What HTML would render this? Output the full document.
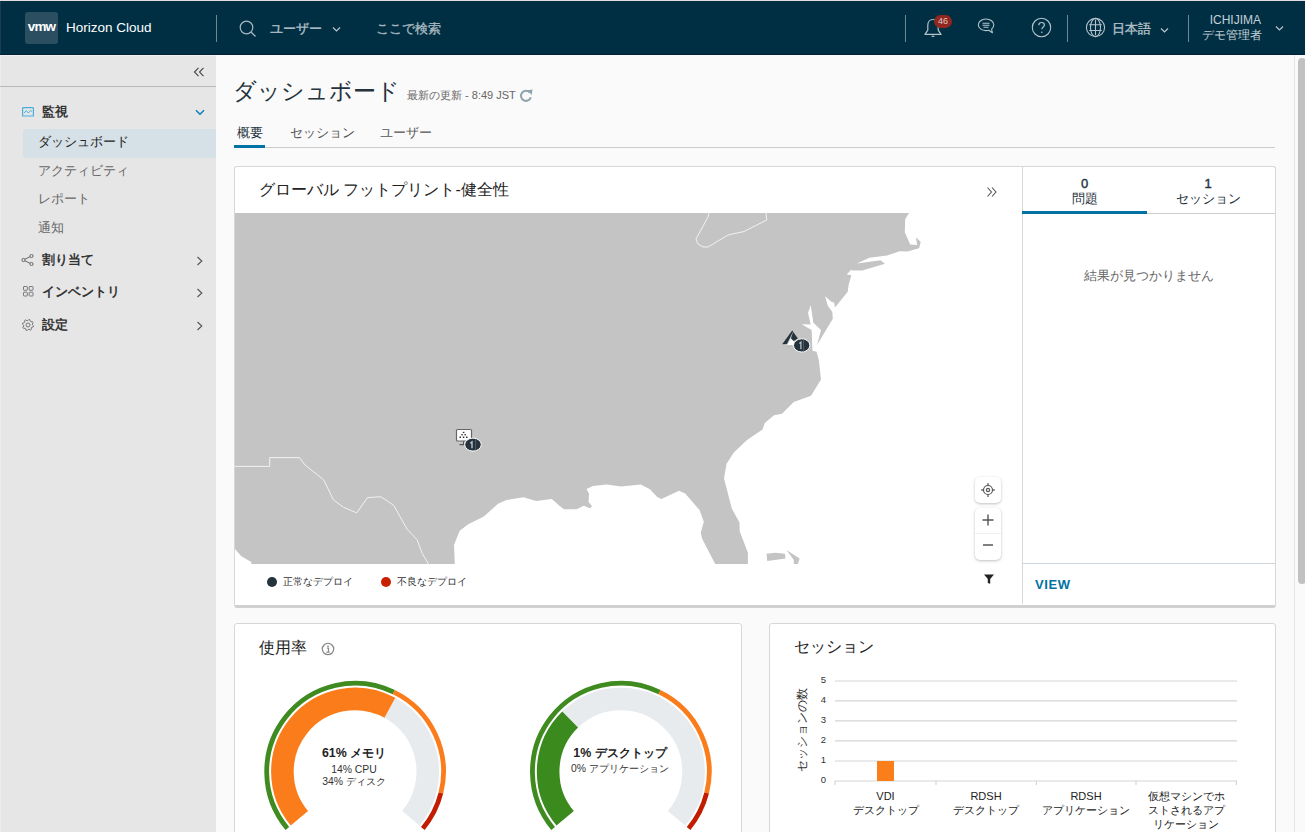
<!DOCTYPE html>
<html><head><meta charset="utf-8">
<style>
*{box-sizing:border-box;margin:0;padding:0}
html,body{width:1305px;height:832px;overflow:hidden;background:#fafafa;font-family:"Liberation Sans",sans-serif;color:#313131}
.abs{position:absolute}
#hdr{position:absolute;left:0;top:0;width:1305px;height:55px;background:#002f44;border-top:1px solid #e2dede}
#hdr:after{content:"";position:absolute;left:0;top:53px;width:1305px;height:1px;background:#00233a}
.htxt{position:absolute;color:#c5d0d6;font-size:13px;line-height:16px;white-space:nowrap}
.vdiv{position:absolute;top:14px;width:1px;height:27px;background:#6f8794}
#side{position:absolute;left:0;top:55px;width:216px;height:777px;background:#e6e6e6;border-top:1px solid #f3f0f0}
.nav{position:absolute;font-size:13px;line-height:16px;white-space:nowrap}
#main{position:absolute;left:216px;top:55px;width:1089px;height:777px;background:#fafafa}
.card{position:absolute;background:#fff;border:1px solid #d7d7d7;border-radius:3px}
</style></head><body>

<div id="hdr">
  <div class="abs" style="left:0;top:0;width:1px;height:53px;background:#1b3d4f"></div>
  <div class="abs" style="left:25px;top:11px;width:33px;height:32px;background:#2b4e60;border-radius:3px"></div>
  <div class="abs" style="left:25px;top:16px;width:33px;text-align:center;color:#fff;font-weight:bold;font-size:13.5px;line-height:20px;letter-spacing:-0.8px">vmw</div>
  <div class="htxt" style="left:66px;top:19px;color:#fff;font-size:13.5px">Horizon Cloud</div>
  <div class="vdiv" style="left:216px"></div>
  <!-- search icon -->
  <svg class="abs" style="left:239px;top:19px" width="18" height="18" viewBox="0 0 18 18"><circle cx="7.5" cy="7.5" r="6.3" fill="none" stroke="#a9b8c0" stroke-width="1.2"/><line x1="12" y1="12" x2="16.5" y2="16.5" stroke="#a9b8c0" stroke-width="1.3"/></svg>
  <div class="htxt" style="left:270px;top:20px;font-weight:normal;-webkit-text-stroke:.35px #b3c1c8;color:#b3c1c8">ユーザー</div>
  <svg class="abs" style="left:332px;top:25px" width="9" height="7" viewBox="0 0 9 7"><polyline points="1,1.5 4.5,5 8,1.5" fill="none" stroke="#b9c6cd" stroke-width="1.2"/></svg>
  <div class="htxt" style="left:376px;top:20px;font-weight:normal;-webkit-text-stroke:.35px #a7b6be;color:#a7b6be">ここで検索</div>

  <div class="vdiv" style="left:905px"></div>
  <!-- bell -->
  <svg class="abs" style="left:922px;top:16px" width="22" height="22" viewBox="0 0 22 22"><path d="M11 2.5c-3.2 0-5.2 2.6-5.2 6v4.6L3 17.4h16l-2.8-4.3V8.5c0-3.4-2-6-5.2-6z" fill="none" stroke="#b5c3ca" stroke-width="1.2" stroke-linejoin="round"/><path d="M9.6 19.3h2.8" stroke="#b5c3ca" stroke-width="1.2"/></svg>
  <div class="abs" style="left:934px;top:14px;width:18px;height:13px;background:#92271f;border-radius:6.5px;color:#dcc6c4;font-size:9px;line-height:13px;text-align:center">46</div>
  <!-- chat -->
  <svg class="abs" style="left:976px;top:16px" width="20" height="18" viewBox="0 0 20 18"><path d="M10 2C5.6 2 2.3 4.6 2.3 7.8c0 3.2 3.3 5.8 7.7 5.8 1 0 1.8-.1 2.7-.4l3.7 2.6-.8-3.6c1.5-1.1 2.2-2.6 2.2-4.4C17.8 4.6 14.4 2 10 2z" fill="none" stroke="#b5c3ca" stroke-width="1.1" stroke-linejoin="round"/><path d="M6.5 6.3h7M6.5 8.3h7M7.5 10.3h5" stroke="#b5c3ca" stroke-width="1.1"/></svg>
  <!-- help -->
  <svg class="abs" style="left:1031px;top:16px" width="21" height="21" viewBox="0 0 21 21"><circle cx="10.5" cy="10.5" r="9.2" fill="none" stroke="#b5c3ca" stroke-width="1.1"/><path d="M7.8 8.2c0-1.6 1.2-2.7 2.8-2.7s2.8 1 2.8 2.5c0 1.9-2.6 2.1-2.6 4.3" fill="none" stroke="#b5c3ca" stroke-width="1.2"/><circle cx="10.8" cy="15.2" r=".8" fill="#b5c3ca"/></svg>
  <div class="vdiv" style="left:1067px"></div>
  <!-- globe -->
  <svg class="abs" style="left:1085px;top:16px" width="21" height="21" viewBox="0 0 21 21"><g fill="none" stroke="#b5c3ca" stroke-width="1.1"><circle cx="10.5" cy="10.5" r="9.1"/><ellipse cx="10.5" cy="10.5" rx="5" ry="9.1"/><line x1="10.5" y1="2.6" x2="10.5" y2="18.2"/><path d="M4.2 7.7h12.6M4.2 13.5h12.6"/></g></svg>
  <div class="htxt" style="left:1112px;top:20px;font-weight:normal;-webkit-text-stroke:.35px #b3c1c8;color:#b3c1c8">日本語</div>
  <svg class="abs" style="left:1160px;top:26px" width="9" height="7" viewBox="0 0 9 7"><polyline points="1,1.5 4.5,5 8,1.5" fill="none" stroke="#b9c6cd" stroke-width="1.2"/></svg>
  <div class="vdiv" style="left:1188px"></div>
  <div class="htxt" style="left:1189px;width:72px;top:12px;text-align:right;font-size:12px;line-height:15px">ICHIJIMA</div>
  <div class="htxt" style="left:1190px;width:72px;top:27px;text-align:right;font-size:11.5px;line-height:15px">デモ管理者</div>
  <svg class="abs" style="left:1275px;top:24px" width="9" height="7" viewBox="0 0 9 7"><polyline points="1,1.5 4.5,5 8,1.5" fill="none" stroke="#b9c6cd" stroke-width="1.2"/></svg>
</div>

<div id="side">
  <div class="abs" style="left:0;top:0;width:1px;height:777px;background:#ececec"></div>
  <svg class="abs" style="left:193px;top:11px" width="12" height="10" viewBox="0 0 12 10"><g fill="none" stroke="#444" stroke-width="1.1"><polyline points="5.5,0.8 1.5,5 5.5,9.2"/><polyline points="10.5,0.8 6.5,5 10.5,9.2"/></g></svg>
  <div class="abs" style="left:0;top:30px;width:216px;height:1px;background:#b9b9b9"></div>
  <!-- monitor icon -->
  <svg class="abs" style="left:22px;top:51px" width="12" height="10" viewBox="0 0 12 10"><rect x=".6" y=".6" width="10.8" height="8.4" rx=".6" fill="none" stroke="#49afd9" stroke-width="1.2"/><polyline points="2.2,6 4.2,3.6 6.3,6 8.6,3.4 10,4.6" fill="none" stroke="#49afd9" stroke-width="1"/></svg>
  <div class="nav" style="left:42px;top:48px;font-weight:bold;color:#333">監視</div>
  <svg class="abs" style="left:195px;top:53px" width="10" height="7" viewBox="0 0 10 7"><polyline points="1,1.2 5,5.3 9,1.2" fill="none" stroke="#0079b8" stroke-width="1.3"/></svg>
  <div class="abs" style="left:23px;top:73px;width:193px;height:29px;background:#d5e0e7;border-radius:3px 0 0 3px"></div>
  <div class="nav" style="left:38px;top:78px;color:#222">ダッシュボード</div>
  <div class="nav" style="left:38px;top:107px;color:#666">アクティビティ</div>
  <div class="nav" style="left:38px;top:135px;color:#666">レポート</div>
  <div class="nav" style="left:38px;top:164px;color:#666">通知</div>
  <!-- share icon -->
  <svg class="abs" style="left:21px;top:197.5px" width="13" height="12" viewBox="0 0 13 12"><g fill="none" stroke="#666" stroke-width="1"><circle cx="2.5" cy="6" r="1.6"/><circle cx="10.5" cy="2" r="1.6"/><circle cx="10.5" cy="10" r="1.6"/><line x1="4" y1="5.2" x2="9" y2="2.7"/><line x1="4" y1="6.8" x2="9" y2="9.3"/></g></svg>
  <div class="nav" style="left:42px;top:196px;font-weight:bold;color:#333">割り当て</div>
  <svg class="abs" style="left:196px;top:200px" width="8" height="10" viewBox="0 0 8 10"><polyline points="1.5,1 5.8,5 1.5,9" fill="none" stroke="#555" stroke-width="1.1"/></svg>
  <!-- grid icon -->
  <svg class="abs" style="left:23px;top:230px" width="11" height="11" viewBox="0 0 11 11"><g fill="none" stroke="#7a7a7a" stroke-width="1"><rect x=".5" y=".5" width="3.8" height="3.8" rx=".5"/><rect x="6.2" y=".5" width="3.8" height="3.8" rx=".5"/><rect x=".5" y="6.2" width="3.8" height="3.8" rx=".5"/><rect x="6.2" y="6.2" width="3.8" height="3.8" rx=".5"/></g></svg>
  <div class="nav" style="left:42px;top:228px;font-weight:bold;color:#333">インベントリ</div>
  <svg class="abs" style="left:196px;top:232px" width="8" height="10" viewBox="0 0 8 10"><polyline points="1.5,1 5.8,5 1.5,9" fill="none" stroke="#555" stroke-width="1.1"/></svg>
  <!-- gear icon -->
  <svg class="abs" style="left:21.5px;top:263px" width="12" height="12" viewBox="0 0 12 12"><g fill="none" stroke="#6a6a6a" stroke-width=".9" stroke-linejoin="round"><circle cx="6" cy="6" r="2"/><polygon points="11.54,6.84 11.27,7.90 9.77,8.27 9.25,8.96 9.32,10.51 8.38,11.07 7.06,10.27 6.20,10.40 5.16,11.54 4.10,11.27 3.73,9.77 3.04,9.25 1.49,9.32 0.93,8.38 1.73,7.06 1.60,6.20 0.46,5.16 0.73,4.10 2.23,3.73 2.75,3.04 2.68,1.49 3.62,0.93 4.94,1.73 5.80,1.60 6.84,0.46 7.90,0.73 8.27,2.23 8.96,2.75 10.51,2.68 11.07,3.62 10.27,4.94 10.40,5.80"/></g></svg>
  <div class="nav" style="left:42px;top:261px;font-weight:bold;color:#333">設定</div>
  <svg class="abs" style="left:196px;top:265px" width="8" height="10" viewBox="0 0 8 10"><polyline points="1.5,1 5.8,5 1.5,9" fill="none" stroke="#555" stroke-width="1.1"/></svg>
</div>

<div id="main">
  <div class="abs" style="left:17px;top:21px;font-size:22.7px;line-height:30px;color:#25333d;white-space:nowrap">ダッシュボード</div>
  <div class="abs" style="left:191px;top:33px;font-size:11px;line-height:14px;color:#666;white-space:nowrap">最新の更新 - 8:49 JST</div>
  <svg class="abs" style="left:303px;top:34px" width="15" height="14" viewBox="0 0 15 14"><path d="M11.8 8.2A5 5 0 1 1 10.6 3.4" fill="none" stroke="#8fa3ad" stroke-width="2"/><polygon points="8.2,1.2 13.6,0.6 12.6,6" fill="#8fa3ad"/></svg>
  <!-- tabs -->
  <div class="abs" style="left:21px;top:70px;font-size:13px;line-height:16px;color:#25333d;white-space:nowrap">概要</div>
  <div class="abs" style="left:74px;top:70px;font-size:13px;line-height:16px;color:#565656;white-space:nowrap">セッション</div>
  <div class="abs" style="left:164px;top:70px;font-size:13px;line-height:16px;color:#565656;white-space:nowrap">ユーザー</div>
  <div class="abs" style="left:18px;top:92px;width:1041px;height:1px;background:#ccc"></div>
  <div class="abs" style="left:18px;top:90px;width:31px;height:3px;background:#0072a3"></div>
</div>

<!-- Card 1 : global footprint -->
<div class="card" style="left:234px;top:166px;width:1042px;height:442px;border-bottom:3px solid #d0d0d0"></div>
<div class="abs" style="left:259px;top:180px;font-size:16px;line-height:20px;color:#222;white-space:nowrap">グローバル フットプリント-健全性</div>
<svg class="abs" style="left:986px;top:186px" width="12" height="12" viewBox="0 0 12 12"><g fill="none" stroke="#555" stroke-width="1.1"><polyline points="1.5,1.5 5.5,6 1.5,10.5"/><polyline points="6,1.5 10,6 6,10.5"/></g></svg>
<!-- map -->
<svg class="abs" style="left:0;top:0" width="1305" height="832" viewBox="0 0 1305 832">
  <rect x="235" y="213" width="787" height="351" fill="#c4c4c4"/>
  <!-- Atlantic -->
  <polygon fill="#fff" points="909,213 905.2,219.3 904.8,232.3 910.2,244.5 917,244.9 916.1,237.3 920.7,242 919.1,248.3 907.3,251.6 899.7,251.2 887.1,255.4 869.4,257.8 856.8,263.4 880.4,260.3 885,263.8 862.3,270.6 851.4,270.6 851.8,268.9 846.7,274.6 851.4,275.2 848.6,285 847.7,291.8 835,307.5 834.1,302.6 831.4,301.7 825.1,296.3 827.8,305.7 832.3,312 832.8,318.8 817,344.9 821,330 813.4,322.8 810.7,305.3 808,313 810.7,324.6 801.7,324.2 811.6,330 812.5,350.8 816.6,351.7 818.8,360 821,379.4 811,395.8 793.75,402 782,413.75 774,415.3 764.8,423 762.5,429.4 747,440 733.8,452.4 726.6,463.8 724,478.3 731.7,508.3 739.6,522.8 739.6,531 747.9,552.8 747.9,564 1022,564 1022,213"/>
  <!-- Gulf -->
  <polygon fill="#fff" points="715.2,564 702.4,539.3 700.7,533 703.8,521.7 699.7,510.3 685.2,493.4 679,490.7 661.4,499 657.2,497 650,489.2 640.7,484.5 621,486.6 606.6,484.5 593,486 586.5,489 589,493.8 588.6,502 592,506.2 590,508.3 583.8,505.8 576.6,509.3 564,509.3 560,506.2 551.8,499 536.2,501 523.4,497.3 506.4,500.1 498,503.8 483.8,516.6 468.2,524.2 459.7,530.7 454,545 454.8,564"/>
  <polygon fill="#fff" points="235,549 241.3,556.2 251.3,562 251.3,564 235,564"/>
  <!-- Bahamas -->
  <polygon fill="#c4c4c4" points="766.5,553.8 775.2,552.8 785,553.8 785.5,558.4 767.3,561"/>
  <polygon fill="#c4c4c4" points="786.6,550 799.6,558.4 798,564 793.8,564 793.8,560"/>
  <!-- borders -->
  <polyline fill="none" stroke="#f2f2f2" stroke-width="1" points="235,466.4 269.7,466.4 269.7,457.6 299.5,457.6 305,465 323.6,479.7 333.5,500 343.4,507.2 356.7,512.9 367.5,497.6 380.8,496.7 393.6,505.2 407.2,529.3 417.1,539.8 422.2,553.4 428.5,564"/>
  <polyline fill="none" stroke="#f2f2f2" stroke-width="1" points="709,213 708,217 696,239 698,244 703,247 708,247 728,235 744,231.5 766.7,220 766,213"/>
</svg>



<!-- markers -->
<svg class="abs" style="left:450px;top:424px" width="36" height="30" viewBox="0 0 36 30">
  <rect x="6.5" y="5.5" width="15" height="11.5" rx="1" fill="#fff" stroke="#666" stroke-width="1.2"/>
  <g fill="#333"><rect x="12.8" y="7.8" width="1.6" height="1.2"/><rect x="11.3" y="10" width="1.4" height="1.4"/><rect x="14.5" y="10" width="1.4" height="1.4"/><rect x="9.5" y="12.5" width="1.5" height="1.5"/><rect x="12.8" y="12.5" width="1.5" height="1.5"/><rect x="16" y="12.5" width="1.5" height="1.5"/></g>
  <path d="M13.5 17.2v3.4h-4" fill="none" stroke="#555" stroke-width="1.1"/>
  <ellipse cx="23" cy="20.6" rx="8.3" ry="6.5" fill="#25333d" stroke="#fff" stroke-width="1"/>
  <path d="M20.4,19.3 L22,17.9 V24.2" fill="none" stroke="#c8ced2" stroke-width="1.3"/><line x1="25.6" y1="15" x2="25.6" y2="26.5" stroke="#5c6770" stroke-width=".8"/>
</svg>
<svg class="abs" style="left:0;top:0" width="1305" height="832" viewBox="0 0 1305 832">
  <path d="M787.2,345.6 L791.3,337.6 L794.2,340.9 L793.6,345.4 Z" fill="#fff"/>
  <path d="M782.2,344.2 L792.2,330.4 L793.1,331.6 L786.9,344.0 Z" fill="#25333d"/>
  <path d="M793.1,331.8 L797.9,338.5 L793.6,340.9 L791.0,338.4 Z" fill="#25333d"/>
  <line x1="787.3" y1="346.4" x2="792.3" y2="345.4" stroke="#888" stroke-width=".5"/>
  <ellipse cx="801.7" cy="345.4" rx="8.2" ry="6.6" fill="#25333d" stroke="#fff" stroke-width="1"/>
  <path d="M799.4,343.6 L800.9,342.2 V349.2" fill="none" stroke="#b8bec2" stroke-width="1.3"/>
  <line x1="803.6" y1="339" x2="803.6" y2="351.8" stroke="#5c6770" stroke-width=".8"/>
</svg>
<!-- map controls -->
<div class="abs" style="left:975px;top:477px;width:26px;height:26px;background:#fff;border-radius:5px;box-shadow:0 1px 3px rgba(0,0,0,.25)"></div>
<svg class="abs" style="left:980px;top:482px" width="16" height="16" viewBox="0 0 16 16"><g fill="none" stroke="#555" stroke-width="1.2"><circle cx="8" cy="8" r="4.5"/><circle cx="8" cy="8" r="1.6"/><line x1="8" y1="1" x2="8" y2="3.5"/><line x1="8" y1="12.5" x2="8" y2="15"/><line x1="1" y1="8" x2="3.5" y2="8"/><line x1="12.5" y1="8" x2="15" y2="8"/></g></svg>
<div class="abs" style="left:975px;top:508px;width:26px;height:52px;background:#fff;border-radius:5px;box-shadow:0 1px 3px rgba(0,0,0,.25)"></div>
<div class="abs" style="left:975px;top:533px;width:26px;height:1px;background:#eee"></div>
<svg class="abs" style="left:981px;top:513px" width="14" height="14" viewBox="0 0 14 14"><path d="M7 1.5v11M1.5 7h11" stroke="#555" stroke-width="1.4"/></svg>
<svg class="abs" style="left:981px;top:538px" width="14" height="14" viewBox="0 0 14 14"><path d="M2 7h10" stroke="#555" stroke-width="1.5"/></svg>
<svg class="abs" style="left:983px;top:573px" width="12" height="12" viewBox="0 0 12 12"><path d="M1 1.5h10L7.2 6v4.8L4.8 10V6z" fill="#222"/></svg>
<!-- legend -->
<div class="abs" style="left:267px;top:577px;width:10px;height:10px;border-radius:50%;background:#25333d"></div>
<div class="abs" style="left:283px;top:575px;font-size:10px;line-height:13px;color:#333;white-space:nowrap">正常なデプロイ</div>
<div class="abs" style="left:381px;top:577px;width:10px;height:10px;border-radius:50%;background:#c92100"></div>
<div class="abs" style="left:397px;top:575px;font-size:10px;line-height:13px;color:#333;white-space:nowrap">不良なデプロイ</div>

<!-- right panel -->
<div class="abs" style="left:1022px;top:167px;width:1px;height:437px;background:#d7d7d7"></div>
<div class="abs" style="left:1022px;top:176px;width:125px;text-align:center;font-size:13px;line-height:15px;-webkit-text-stroke:.4px #25333d;color:#25333d">0</div>
<div class="abs" style="left:1022px;top:191px;width:125px;text-align:center;font-size:13px;line-height:16px;color:#25333d">問題</div>
<div class="abs" style="left:1144px;top:176px;width:128px;text-align:center;font-size:13px;line-height:15px;-webkit-text-stroke:.4px #25333d;color:#25333d">1</div>
<div class="abs" style="left:1144px;top:191px;width:128px;text-align:center;font-size:13px;line-height:16px;color:#25333d">セッション</div>
<div class="abs" style="left:1022px;top:213px;width:253px;height:1px;background:#ccc"></div>
<div class="abs" style="left:1022px;top:211px;width:125px;height:3px;background:#0072a3"></div>
<div class="abs" style="left:1022px;top:268px;width:253px;text-align:center;font-size:13px;line-height:16px;color:#666">結果が見つかりません</div>
<div class="abs" style="left:1022px;top:563px;width:253px;height:1px;background:#ccd6db"></div>
<div class="abs" style="left:1035px;top:577px;font-size:13px;line-height:15px;font-weight:bold;color:#0072a3;letter-spacing:.6px">VIEW</div>

<!-- Card 2 : usage -->
<div class="card" style="left:234px;top:623px;width:508px;height:230px"></div>
<div class="abs" style="left:259px;top:638px;font-size:16px;line-height:20px;color:#222;white-space:nowrap">使用率</div>
<svg class="abs" style="left:321px;top:641.5px" width="14" height="14" viewBox="0 0 14 14"><circle cx="7" cy="7" r="5.7" fill="none" stroke="#8a8a8a" stroke-width="1.3"/><circle cx="7" cy="4.3" r=".85" fill="#8a8a8a"/><path d="M6 6.1h1.5v3.9M5.4 10.2h3.2" fill="none" stroke="#8a8a8a" stroke-width="1.2"/></svg>
<svg class="abs" style="left:0;top:0" width="1305" height="832" viewBox="0 0 1305 832" id="gauges">
<path d="M287.38 828.42A88.4 88.4 0 0 1 393.85 692.15" stroke="#3f8b1f" stroke-width="4.8" fill="none"/>
<path d="M393.85 692.15A88.4 88.4 0 0 1 440.87 792.99" stroke="#fb7c1a" stroke-width="4.8" fill="none"/>
<path d="M440.87 792.99A88.4 88.4 0 0 1 422.82 828.42" stroke="#c21d00" stroke-width="4.8" fill="none"/>
<path d="M389.90 707.77A72.7 72.7 0 0 1 410.79 818.33" stroke="#e8ebee" stroke-width="22.6" fill="none"/>
<path d="M299.41 818.33A72.7 72.7 0 0 1 389.90 707.77" stroke="#fb7c1a" stroke-width="22.6" fill="none"/>
<path d="M553.13 828.42A88.4 88.4 0 0 1 659.60 692.15" stroke="#3f8b1f" stroke-width="4.8" fill="none"/>
<path d="M659.60 692.15A88.4 88.4 0 0 1 706.62 792.99" stroke="#fb7c1a" stroke-width="4.8" fill="none"/>
<path d="M706.62 792.99A88.4 88.4 0 0 1 688.57 828.42" stroke="#c21d00" stroke-width="4.8" fill="none"/>
<path d="M570.17 719.48A72.7 72.7 0 0 1 676.54 818.33" stroke="#e8ebee" stroke-width="22.6" fill="none"/>
<path d="M565.16 818.33A72.7 72.7 0 0 1 570.17 719.48" stroke="#3b8a1e" stroke-width="22.6" fill="none"/>
</svg>
<div class="abs" style="left:254px;top:746px;width:200px;text-align:center;font-size:12.4px;line-height:15px;font-weight:bold;color:#222">61% メモリ</div>
<div class="abs" style="left:254px;top:763px;width:200px;text-align:center;font-size:10.4px;line-height:13px;color:#333">14% CPU</div>
<div class="abs" style="left:254px;top:775px;width:200px;text-align:center;font-size:10.4px;line-height:13px;color:#333">34% ディスク</div>
<div class="abs" style="left:520px;top:746px;width:200px;text-align:center;font-size:12.4px;line-height:15px;font-weight:bold;color:#222">1% デスクトップ</div>
<div class="abs" style="left:520px;top:762px;width:200px;text-align:center;font-size:10.4px;line-height:13px;color:#333">0% アプリケーション</div>

<!-- Card 3 : sessions -->
<div class="card" style="left:769px;top:623px;width:507px;height:230px"></div>
<div class="abs" style="left:794px;top:637px;font-size:16px;line-height:20px;color:#222;white-space:nowrap">セッション</div>
<div class="abs" style="left:742px;top:723px;width:120px;height:14px;transform:rotate(-90deg);text-align:center;font-size:12px;line-height:14px;color:#333;white-space:nowrap">セッションの数</div>
<svg class="abs" style="left:0;top:0" width="1305" height="832" viewBox="0 0 1305 832">
  <g stroke="#d5d5d5" stroke-width="1.2">
    <line x1="835" y1="681" x2="1237" y2="681"/><line x1="835" y1="700.8" x2="1237" y2="700.8"/><line x1="835" y1="720.8" x2="1237" y2="720.8"/><line x1="835" y1="740.8" x2="1237" y2="740.8"/><line x1="835" y1="761" x2="1237" y2="761"/><line x1="835" y1="781" x2="1237" y2="781"/>
    <line x1="835" y1="781" x2="835" y2="785"/><line x1="936" y1="781" x2="936" y2="785"/><line x1="1036.4" y1="781" x2="1036.4" y2="785"/><line x1="1136" y1="781" x2="1136" y2="785"/><line x1="1236.4" y1="781" x2="1236.4" y2="785"/>
  </g>
  <rect x="877" y="761" width="17" height="20" fill="#fa7f1b"/>
  <g font-family="Liberation Sans" font-size="9.5" fill="#333" text-anchor="end">
    <text x="826" y="683.3">5</text><text x="826" y="703.1">4</text><text x="826" y="723.1">3</text><text x="826" y="743.1">2</text><text x="826" y="763.3">1</text><text x="826" y="783.3">0</text>
  </g>
</svg>
<div class="abs" style="left:835px;top:789px;width:101px;text-align:center;font-size:11px;line-height:14px;color:#222">VDI<br>デスクトップ</div>
<div class="abs" style="left:936px;top:789px;width:100px;text-align:center;font-size:11px;line-height:14px;color:#222">RDSH<br>デスクトップ</div>
<div class="abs" style="left:1036px;top:789px;width:100px;text-align:center;font-size:11px;line-height:14px;color:#222;white-space:nowrap">RDSH<br>アプリケーション</div>
<div class="abs" style="left:1146px;top:789px;width:80px;text-align:center;font-size:11px;line-height:14px;color:#222">仮想マシンでホ<br>ストされるアプ<br>リケーション</div>

<!-- scrollbar -->
<div class="abs" style="left:1294px;top:55px;width:1px;height:777px;background:#e6e6e6"></div>
<div class="abs" style="left:1298px;top:58px;width:8px;height:526px;background:#c1c1c1;border-radius:4px"></div>

</body></html>
